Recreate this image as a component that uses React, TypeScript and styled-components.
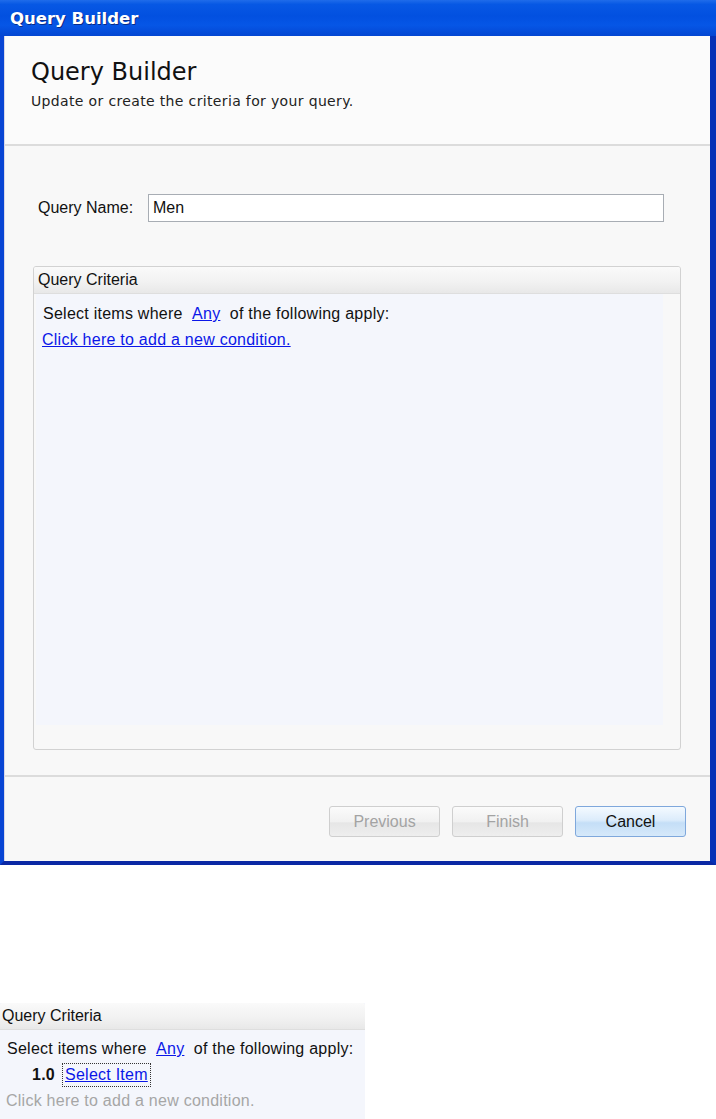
import React from 'react';
import styled, { createGlobalStyle } from 'styled-components';

const GlobalStyle = createGlobalStyle`
  html, body {
    margin: 0;
    padding: 0;
    background: #ffffff;
  }
  body {
    width: 716px;
    height: 1119px;
    overflow: hidden;
    font-family: "Liberation Sans", Arial, sans-serif;
  }
`;

const Page = styled.div`
  display: flex;
  flex-direction: column;
  width: 716px;
`;

const Window = styled.div`
  display: flex;
  flex-direction: column;
  width: 716px;
  height: 865px;
  box-sizing: border-box;
  background: #0a4fd8;
  border-left: 4px solid #0845d4;
  border-right: 6px solid #0631b6;
  border-bottom: 4px solid #0a28a4;
`;

const TitleBar = styled.div`
  display: flex;
  align-items: center;
  height: 36px;
  margin: 0 -6px 0 -4px;
  padding-left: 10px;
  background: linear-gradient(180deg, #1f6cea 0%, #0758e4 12%, #0250e0 45%, #0656e6 70%, #0446d2 100%);
  color: #ffffff;
  font-family: "DejaVu Sans", Verdana, sans-serif;
  font-weight: bold;
  font-size: 16.5px;
  text-shadow: 1px 1px 0 #0a2b86;
`;

const Client = styled.div`
  flex: 1;
  display: flex;
  flex-direction: column;
  background: #f8f8f8;
  border-left: 1px solid #d8d8e8;
`;

const Header = styled.div`
  height: 110px;
  box-sizing: border-box;
  padding: 21px 0 0 26px;
  background: #fbfbfb;
  border-bottom: 2px solid #dcdcdc;
  font-family: "DejaVu Sans", Verdana, sans-serif;
  color: #111;
`;

const HeaderTitle = styled.div`
  font-size: 24px;
  line-height: 30px;
`;

const HeaderSub = styled.div`
  margin-top: 6px;
  font-size: 14px;
  letter-spacing: 0.35px;
  color: #222;
`;

const Body = styled.div`
  flex: 1;
  display: flex;
  flex-direction: column;
  padding: 48px 29px 25px 28px;
  border-bottom: 2px solid #dcdcdc;
`;

const NameRow = styled.div`
  display: flex;
  align-items: center;
  padding-left: 5px;
  padding-right: 17px;
  font-size: 16px;
  color: #111;
`;

const NameLabel = styled.div`
  width: 110px;
`;

const NameInput = styled.div`
  flex: 1;
  height: 28px;
  box-sizing: border-box;
  display: flex;
  align-items: center;
  padding-left: 4px;
  background: #ffffff;
  border: 1px solid #a8adb4;
  font-size: 16px;
`;

const Panel = styled.div<{ $cropped?: boolean }>`
  display: flex;
  flex-direction: column;
  flex: ${p => (p.$cropped ? 'none' : '1')};
  margin-top: ${p => (p.$cropped ? '0' : '44px')};
  border: ${p => (p.$cropped ? 'none' : '1px solid #d2d2d2')};
  border-radius: 3px;
  background: #f8f8f8;
  overflow: hidden;
`;

const PanelHeader = styled.div<{ $cropped?: boolean }>`
  height: 26px;
  display: flex;
  align-items: center;
  padding-left: ${p => (p.$cropped ? '2px' : '4px')};
  background: linear-gradient(180deg, #fafafa 0%, #f1f1f1 60%, #e8e8e8 100%);
  border-bottom: 1px solid #dedede;
  font-size: 16px;
  color: #111;
`;

const PanelBody = styled.div<{ $cropped?: boolean }>`
  flex: 1;
  display: flex;
  flex-direction: column;
  margin: ${p => (p.$cropped ? '0' : '0 17px 24px 2px')};
  padding: ${p => (p.$cropped ? '6px 0 0 7px' : '7px 0 0 7px')};
  background: #f4f6fc;
  font-size: 16px;
  letter-spacing: 0.25px;
  color: #111;
`;

const Line = styled.div`
  display: flex;
  align-items: center;
  height: 26px;
  white-space: pre;
`;

const Link = styled.span<{ $focused?: boolean }>`
  color: #0b16e8;
  text-decoration: underline;
  outline: ${p => (p.$focused ? '1px dotted #333' : 'none')};
  outline-offset: 2px;
`;

const AddCondition = styled.div<{ $muted?: boolean }>`
  display: flex;
  align-items: center;
  height: 26px;
  margin-left: -1px;
  color: ${p => (p.$muted ? '#a6a6a6' : '#0b16e8')};
  text-decoration: ${p => (p.$muted ? 'none' : 'underline')};
`;

const Number = styled.span`
  font-weight: bold;
  margin-left: 25px;
  margin-right: 10px;
`;

const Footer = styled.div`
  height: 84px;
  display: flex;
  justify-content: flex-end;
  align-items: flex-start;
  gap: 12px;
  padding: 29px 24px 0 0;
  box-sizing: border-box;
`;

const Button = styled.div<{ $primary?: boolean }>`
  width: 111px;
  height: 31px;
  box-sizing: border-box;
  display: flex;
  align-items: center;
  justify-content: center;
  border-radius: 3px;
  font-size: 16px;
  color: ${p => (p.$primary ? '#111' : '#a3a3a3')};
  border: 1px solid ${p => (p.$primary ? '#7fa8dc' : '#cfcfcf')};
  background: ${p =>
    p.$primary
      ? 'linear-gradient(180deg, #f4faff 0%, #dcecfb 45%, #c4def7 55%, #d6e9fa 100%)'
      : 'linear-gradient(180deg, #fbfbfb 0%, #f1f1f1 50%, #e6e6e6 55%, #eeeeee 100%)'};
`;

const Snippet = styled.div`
  width: 365px;
  height: 116px;
  margin-top: 138px;
  display: flex;
  flex-direction: column;
  background: #f4f6fc;
  overflow: hidden;
`;

export default function App() {
  return (
    <Page>
      <GlobalStyle />
      <Window>
        <TitleBar>Query Builder</TitleBar>
        <Client>
          <Header>
            <HeaderTitle>Query Builder</HeaderTitle>
            <HeaderSub>Update or create the criteria for your query.</HeaderSub>
          </Header>
          <Body>
            <NameRow>
              <NameLabel>Query Name:</NameLabel>
              <NameInput>Men</NameInput>
            </NameRow>
            <Panel>
              <PanelHeader>Query Criteria</PanelHeader>
              <PanelBody>
                <Line>
                  Select items where  <Link>Any</Link>  of the following apply:
                </Line>
                <AddCondition>Click here to add a new condition.</AddCondition>
              </PanelBody>
            </Panel>
          </Body>
          <Footer>
            <Button>Previous</Button>
            <Button>Finish</Button>
            <Button $primary>Cancel</Button>
          </Footer>
        </Client>
      </Window>
      <Snippet>
        <Panel $cropped>
          <PanelHeader $cropped>Query Criteria</PanelHeader>
          <PanelBody $cropped>
            <Line>
              Select items where  <Link>Any</Link>  of the following apply:
            </Line>
            <Line>
              <Number>1.0</Number>
              <Link $focused>Select Item</Link>
            </Line>
            <AddCondition $muted>Click here to add a new condition.</AddCondition>
          </PanelBody>
        </Panel>
      </Snippet>
    </Page>
  );
}
